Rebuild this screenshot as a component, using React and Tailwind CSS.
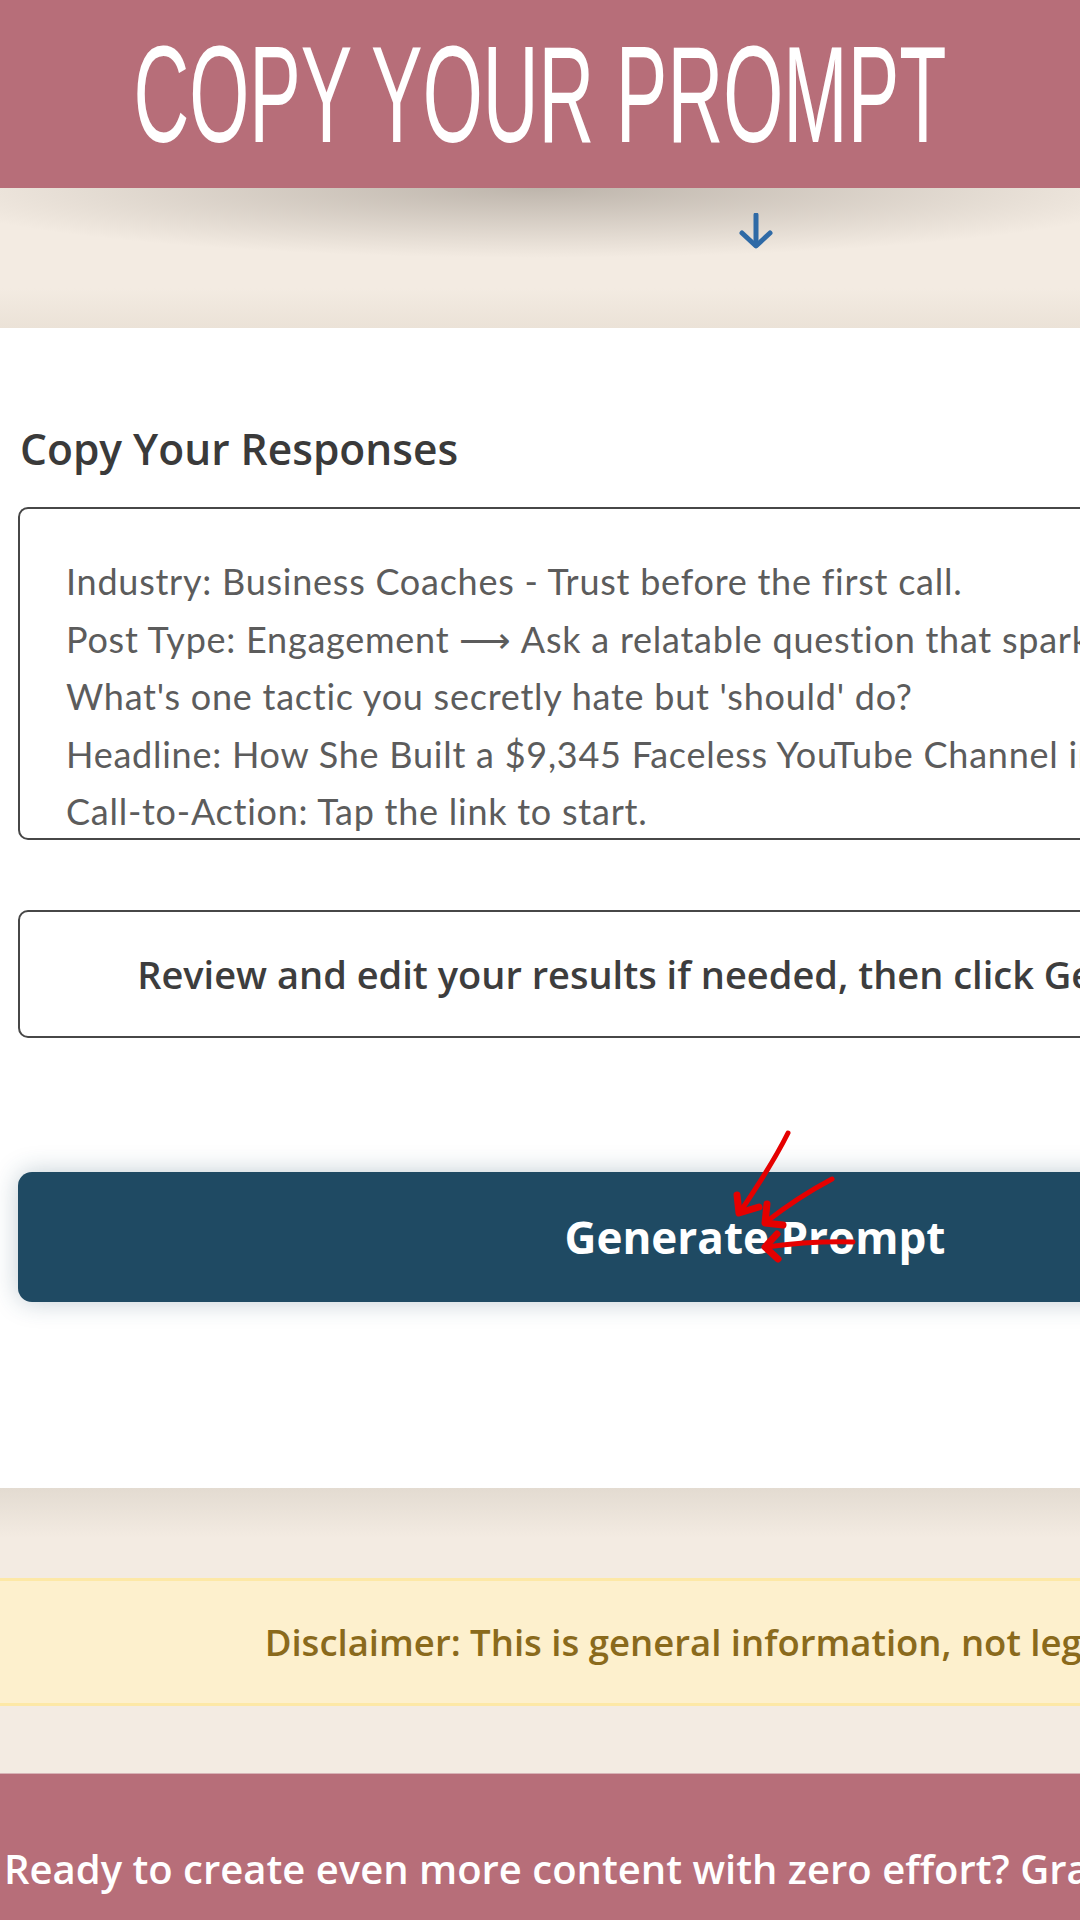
import React from "react";

function RedArrows() {
  return (
    <svg
      className="absolute left-[720px] top-[797px] z-10"
      width="150"
      height="140"
      viewBox="0 0 150 140"
      fill="none"
      stroke="#e50000"
      strokeLinecap="round"
      strokeLinejoin="round"
    >
      <path d="M68 8 Q52 40 20 87" strokeWidth="5" />
      <path d="M17 70 L19 88 L39 82" strokeWidth="7" />
      <path d="M112 54 Q78 72 46 97" strokeWidth="5" />
      <path d="M47 79 L45 98 L63 100" strokeWidth="7" />
      <path d="M133 117 Q90 116 46 122" strokeWidth="5" />
      <path d="M57 109 L45 122 L58 134" strokeWidth="7" />
    </svg>
  );
}

export default function App() {
  return (
    <div className="relative w-[1080px] h-[1920px] overflow-hidden bg-white font-['Open_Sans',sans-serif]">
      <header className="relative z-10 h-[188px] w-[1080px] bg-[#b76e79] flex items-center justify-center">
        <h1 className="inline-block whitespace-nowrap text-white text-[138px] leading-none font-normal scale-x-[0.56] font-['Liberation_Sans',Arial,sans-serif]">
          COPY YOUR PROMPT
        </h1>
      </header>

      <div className="w-[1510px]">
        <section className="relative h-[140px] bg-[linear-gradient(#f3ebe2,#f3ebe2_100px,#ebe2d7)]">
          <div className="absolute left-0 top-0 w-[1080px] h-[70px] bg-[radial-gradient(ellipse_58%_100%_at_50%_0%,rgba(90,80,70,0.35),rgba(90,80,70,0)_100%)]" />
          <svg
            className="absolute left-[738px] top-[25px]"
            width="36"
            height="36"
            viewBox="0 0 36 36"
            fill="none"
            stroke="#2f6aa6"
            strokeWidth="5"
            strokeLinecap="round"
            strokeLinejoin="round"
          >
            <path d="M18 2 L18 32" />
            <path d="M4 20 L18 33 L32 20" />
          </svg>
        </section>

        <section className="relative h-[1160px] bg-white px-[18px] pt-[97px]">
          <h2 className="pl-[2px] text-[42.5px] leading-[48px] font-semibold text-[#3a3a3a]">
            Copy Your Responses
          </h2>

          <div className="mt-[34px] h-[333px] overflow-hidden rounded-[10px] border-[2.5px] border-[#474747] pl-[46px] pt-[44px] font-['Lato',sans-serif] text-[36px] tracking-[0.75px] leading-[57.5px] text-[#5c5c5c] whitespace-nowrap">
            <p>Industry: Business Coaches - Trust before the first call.</p>
            <p>Post Type: Engagement ⟶ Ask a relatable question that sparks conversation.</p>
            <p>What's one tactic you secretly hate but 'should' do?</p>
            <p>Headline: How She Built a $9,345 Faceless YouTube Channel in 30 Days</p>
            <p>Call-to-Action: Tap the link to start.</p>
          </div>

          <div className="mt-[70px] h-[128px] rounded-[10px] border-[2.5px] border-[#474747] flex items-center justify-center">
            <p className="whitespace-nowrap text-[38px] font-semibold text-[#3d3d3d]">
              Review and edit your results if needed, then click Generate Prompt.
            </p>
          </div>

          <button className="mt-[134px] h-[130px] w-full rounded-[14px] bg-[#1f4a63] shadow-[0_0_26px_rgba(31,74,99,0.28)] flex items-center justify-center">
            <span className="text-[44px] font-bold text-white leading-none">Generate Prompt</span>
          </button>

          <RedArrows />
        </section>

        <section className="h-[285px] bg-[linear-gradient(#e3dbd1,#f3ebe2_50px)] pt-[90px]">
          <div className="h-[128px] border-y-[3px] border-[#fde8a6] bg-[#fdf0cd] flex items-center justify-center">
            <p className="whitespace-nowrap text-[36.5px] font-semibold text-[#8a6a1c]">
              Disclaimer: This is general information, not legal advice.
            </p>
          </div>
        </section>

        <footer className="h-[200px] border-t border-[#d7b3b6] bg-[#b76e79] pt-[62px] text-white font-semibold text-[40px] leading-[66px]">
          <p className="whitespace-nowrap pl-[4px]">
            Ready to create even more content with zero effort? Grab the Done-For-You Content Pack
          </p>
          <p className="whitespace-nowrap text-center">Book Now!</p>
        </footer>
      </div>
    </div>
  );
}
